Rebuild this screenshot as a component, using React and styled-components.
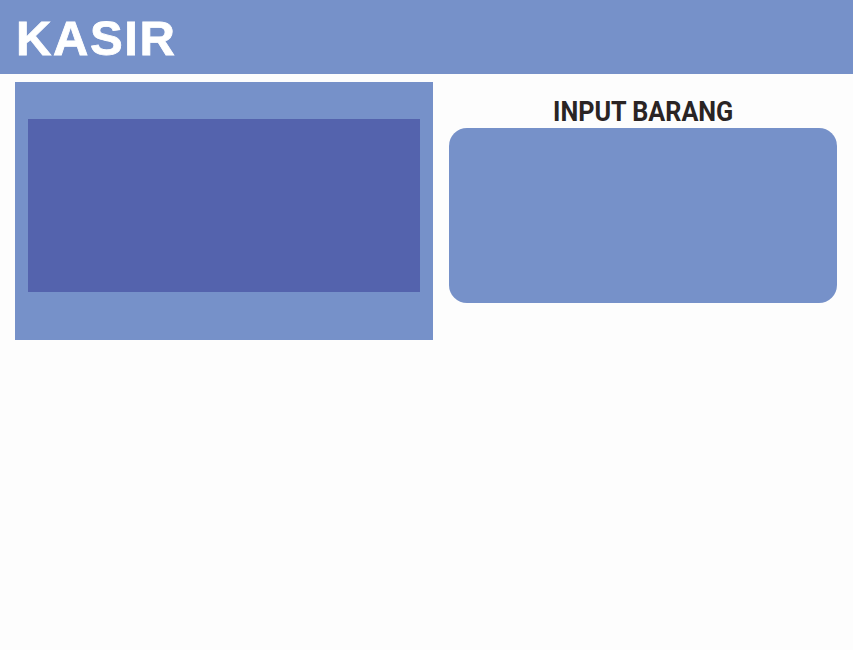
import React from "react";
import styled, { createGlobalStyle } from "styled-components";

const Global = createGlobalStyle`
  html, body { margin: 0; padding: 0; background: #fdfdfd; }
  body { font-family: "Liberation Sans", Arial, sans-serif; }
`;

const Page = styled.div`
  width: 853px;
  min-height: 650px;
  background: #fdfdfd;
`;

const Header = styled.header`
  height: 74px;
  background: #7691c9;
  display: flex;
  align-items: center;
  padding-left: 16px;
  box-sizing: border-box;
`;

const Logo = styled.h1`
  margin: 0;
  color: #ffffff;
  font-family: "Liberation Sans", Arial, sans-serif;
  font-weight: 700;
  font-size: 49px;
  letter-spacing: 1.6px;
  line-height: 1;
  margin-top: 2px;
  -webkit-text-stroke: 0.8px #ffffff;
`;

const Main = styled.main`
  display: grid;
  grid-template-columns: 418px 388px;
  column-gap: 16px;
  padding: 8px 16px 0 15px;
  align-items: start;
`;

const LeftPanel = styled.section`
  background: #7691c9;
  padding: 37px 13px 48px 13px;
`;

const Screen = styled.div`
  background: #5463ad;
  height: 173px;
`;

const RightCol = styled.section`
  display: flex;
  flex-direction: column;
  align-items: center;
`;

const Title = styled.h2`
  margin: 13px 0 0 0;
  height: 33px;
  color: #2a2424;
  font-family: Roboto, "Liberation Sans", sans-serif;
  font-weight: 700;
  font-size: 28px;
  line-height: 33px;
  letter-spacing: 0px;
  transform: scaleX(0.9);
`;

const Card = styled.div`
  align-self: stretch;
  background: #7691c9;
  border-radius: 18px;
  height: 175px;
`;

export default function App() {
  return (
    <Page>
      <Global />
      <Header>
        <Logo>KASIR</Logo>
      </Header>
      <Main>
        <LeftPanel>
          <Screen />
        </LeftPanel>
        <RightCol>
          <Title>INPUT BARANG</Title>
          <Card />
        </RightCol>
      </Main>
    </Page>
  );
}
